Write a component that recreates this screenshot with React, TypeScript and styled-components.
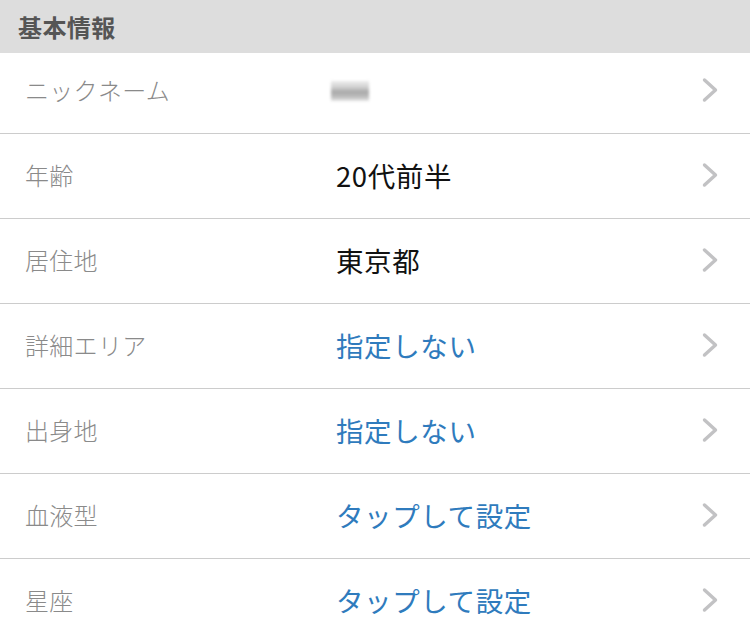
import * as React from "react";
import styled, { createGlobalStyle } from "styled-components";

const Global = createGlobalStyle`
  html, body {
    margin: 0;
    padding: 0;
    background: #ffffff;
    font-family: "Noto Sans CJK JP", "Noto Sans", sans-serif;
  }
`;

type Tone = "plain" | "link";

type Item = {
  label: string;
  value?: string;
  tone?: Tone;
  blurred?: boolean;
};

const items: Item[] = [
  { label: "ニックネーム", blurred: true },
  { label: "年齢", value: "20代前半", tone: "plain" },
  { label: "居住地", value: "東京都", tone: "plain" },
  { label: "詳細エリア", value: "指定しない", tone: "link" },
  { label: "出身地", value: "指定しない", tone: "link" },
  { label: "血液型", value: "タップして設定", tone: "link" },
  { label: "星座", value: "タップして設定", tone: "link" },
];

const Section = styled.section`
  width: 750px;
  height: 643px;
  overflow: hidden;
  background: #fff;
`;

const Header = styled.div`
  height: 53px;
  display: flex;
  align-items: center;
  padding-left: 18px;
  background: #dddddd;
  color: #555555;
  font-size: 24px;
  font-weight: 700;
  letter-spacing: 0.4px;
`;

const Row = styled.div<{ $first?: boolean }>`
  box-sizing: border-box;
  height: ${(p) => (p.$first ? 81 : 85)}px;
  display: grid;
  grid-template-columns: 311px 1fr 46px;
  align-items: center;
  padding: 0 0 ${(p) => (p.$first ? 7 : 3)}px 25px;
  border-bottom: 1px solid #cccccc;
`;

const Label = styled.div`
  color: #8a8a8a;
  font-size: 24px;
  font-weight: 300;
  letter-spacing: 0.3px;
`;

const Value = styled.div<{ $tone: Tone }>`
  font-size: 27.5px;
  font-weight: 400;
  color: ${(p) => (p.$tone === "link" ? "#2f7bbd" : "#111111")};
  letter-spacing: 0.6px;
`;

const Blur = styled.div`
  width: 38px;
  height: 20px;
  margin-left: -5px;
  margin-top: 2px;
  background: linear-gradient(
    180deg,
    #ececec 0%,
    #d2d2d2 30%,
    #a8a8a8 55%,
    #bebebe 80%,
    #e6e6e6 100%
  );
  filter: blur(1.6px);
`;

const Chevron = styled.svg`
  width: 18px;
  height: 26px;
  display: block;
  margin-left: -3px;
`;

function Arrow() {
  return (
    <Chevron viewBox="0 0 18 26">
      <path
        d="M3.5 3 L14.5 13 L3.5 23"
        fill="none"
        stroke="#c2c2c4"
        strokeWidth="3.4"
        strokeLinecap="round"
        strokeLinejoin="round"
      />
    </Chevron>
  );
}

export default function App() {
  return (
    <>
      <Global />
      <Section>
        <Header>基本情報</Header>
        {items.map((it, i) => (
          <Row key={it.label} $first={i === 0}>
            <Label>{it.label}</Label>
            {it.blurred ? (
              <Blur />
            ) : (
              <Value $tone={it.tone ?? "plain"}>{it.value}</Value>
            )}
            <Arrow />
          </Row>
        ))}
      </Section>
    </>
  );
}
